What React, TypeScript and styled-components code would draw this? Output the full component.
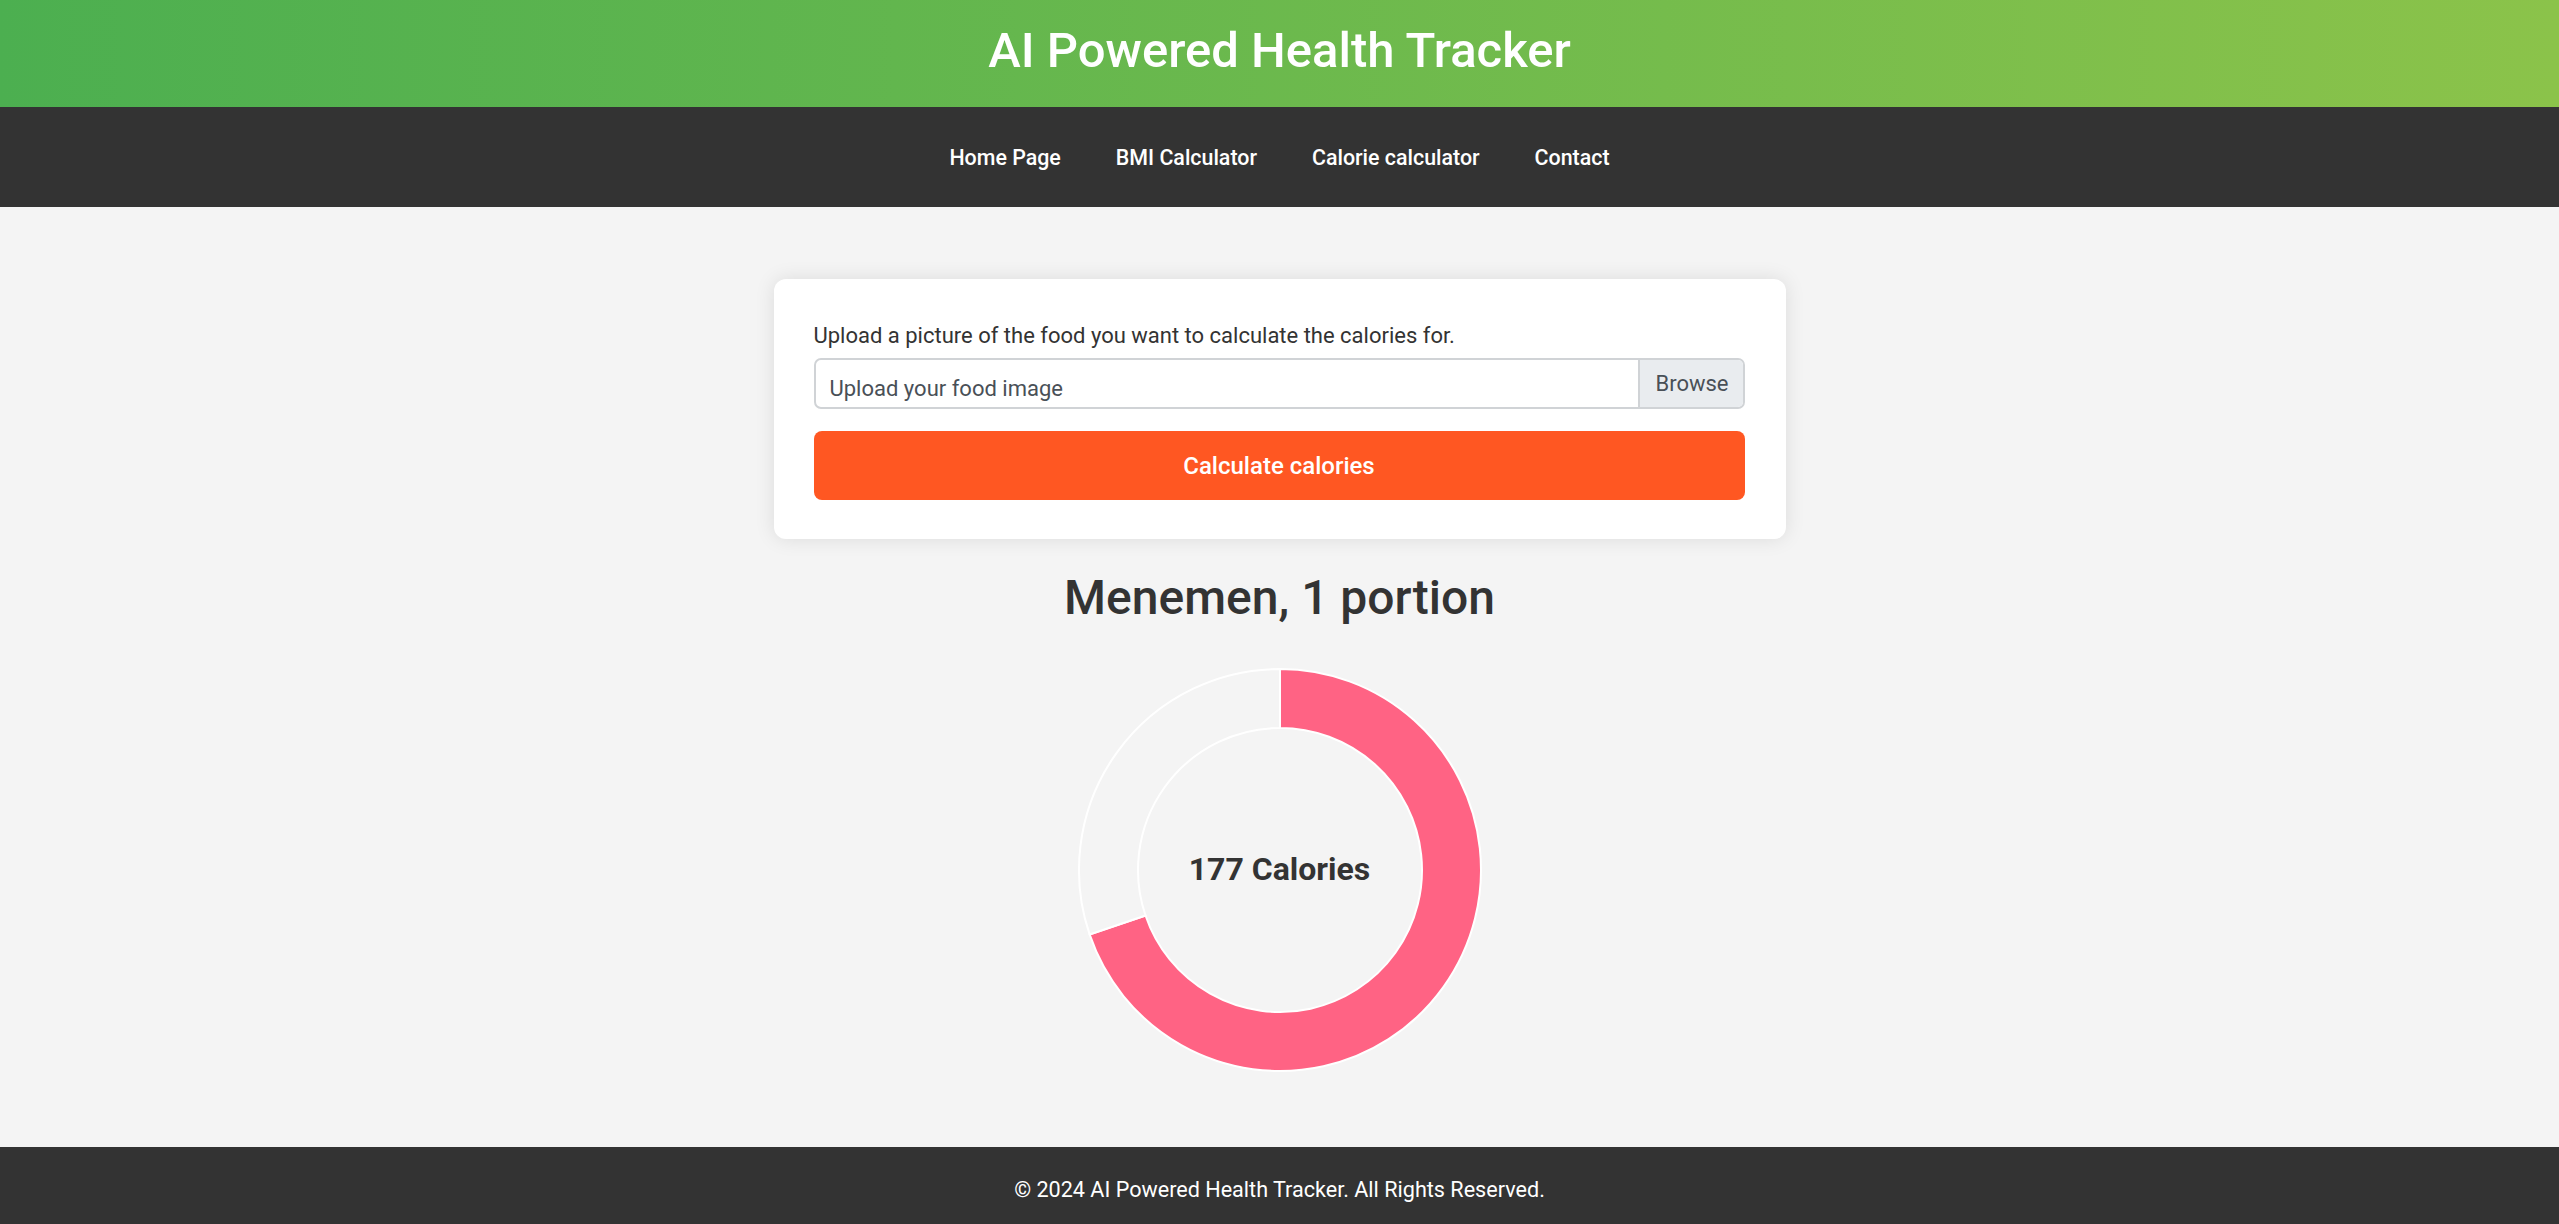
import styled, { createGlobalStyle } from "styled-components";

const GlobalStyle = createGlobalStyle`
    html, body {
        margin: 0;
        padding: 0;
        background-color: #f4f4f4;
        font-family: Roboto, "Liberation Sans", sans-serif;
    }
    * {
        box-sizing: border-box;
    }
`

const calories = 177
const share = 251.3 / 360

function polar(angle: number, radius: number) {
    const rad = (angle - 90) * Math.PI / 180
    return [radius * Math.cos(rad), radius * Math.sin(rad)]
}

function arcPath(start: number, end: number, outer: number, inner: number) {
    const large = end - start > 180 ? 1 : 0
    const [x1, y1] = polar(start, outer)
    const [x2, y2] = polar(end, outer)
    const [x3, y3] = polar(end, inner)
    const [x4, y4] = polar(start, inner)
    return `M ${x1} ${y1} A ${outer} ${outer} 0 ${large} 1 ${x2} ${y2} L ${x3} ${y3} A ${inner} ${inner} 0 ${large} 0 ${x4} ${y4} Z`
}

export default function App() {
    const split = share * 360

    return (
        <Page>
            <GlobalStyle />
            <Header>
                <h1>AI Powered Health Tracker</h1>
            </Header>
            <Nav>
                <NavLink href="#">Home Page</NavLink>
                <NavLink href="#">BMI Calculator</NavLink>
                <NavLink href="#">Calorie calculator</NavLink>
                <NavLink href="#">Contact</NavLink>
            </Nav>
            <Main>
                <Card>
                    <Label>Upload a picture of the food you want to calculate the calories for.</Label>
                    <FileInput>
                        <span className="placeholder">Upload your food image</span>
                        <span className="browse">Browse</span>
                    </FileInput>
                    <SubmitButton>Calculate calories</SubmitButton>
                </Card>
                <Result>Menemen, 1 portion</Result>
                <Donut>
                    <svg width="406" height="406" viewBox="-203 -203 406 406">
                        <path d={arcPath(0, split, 201, 142)} fill="#ff6384" stroke="#ffffff" strokeWidth="2" />
                        <path d={arcPath(split, 360, 201, 142)} fill="#f4f4f4" stroke="#ffffff" strokeWidth="2" />
                    </svg>
                    <DonutLabel>{calories} Calories</DonutLabel>
                </Donut>
            </Main>
            <Footer>© 2024 AI Powered Health Tracker. All Rights Reserved.</Footer>
        </Page>
    )
}

const Page = styled.div`
    display: flex;
    flex-direction: column;
    min-height: 100vh;
`

const Header = styled.header`
    height: 107px;
    display: flex;
    align-items: center;
    justify-content: center;
    background: linear-gradient(90deg, #4caf50, #8bc34a);

    h1 {
        margin: 0;
        color: white;
        font-size: 49px;
        font-weight: 500;
        padding-bottom: 6px;
    }
`

const Nav = styled.nav`
    height: 100px;
    display: flex;
    align-items: center;
    justify-content: center;
    gap: 55px;
    background-color: #333;
`

const NavLink = styled.a`
    color: white;
    text-decoration: none;
    font-size: 21.4px;
    font-weight: 500;
`

const Main = styled.main`
    flex: 1;
    display: flex;
    flex-direction: column;
    align-items: center;
    padding-top: 72px;
`

const Card = styled.div`
    width: 1012px;
    padding: 40px 41px 39px 40px;
    background-color: white;
    border-radius: 12px;
    box-shadow: 0 0 20px rgba(0, 0, 0, 0.1);
    display: flex;
    flex-direction: column;
`

const Label = styled.label`
    font-size: 22px;
    line-height: 33px;
    font-weight: 400;
    color: #333;
    margin-bottom: 6px;
`

const FileInput = styled.div`
    display: flex;
    height: 51px;
    border: 2px solid #d0d3d6;
    border-radius: 7px;
    overflow: hidden;
    font-size: 22px;
    color: #495057;

    .placeholder {
        flex: 1;
        display: flex;
        align-items: center;
        padding: 10px 14px 0;
    }

    .browse {
        display: flex;
        align-items: center;
        padding: 0 14px 0 15px;
        background-color: #e9ecef;
        border-left: 2px solid #d0d3d6;
    }
`

const SubmitButton = styled.button`
    margin-top: 22px;
    height: 69px;
    border: none;
    border-radius: 8px;
    background-color: #ff5722;
    color: white;
    font-family: Roboto, "Liberation Sans", sans-serif;
    font-size: 24px;
    font-weight: 500;
    cursor: pointer;
`

const Result = styled.h2`
    margin: 31px 0 0;
    font-size: 48px;
    line-height: 55px;
    font-weight: 500;
    color: #333;
`

const Donut = styled.div`
    position: relative;
    margin-top: 42px;
    width: 406px;
    height: 406px;

    svg {
        display: block;
    }
`

const DonutLabel = styled.div`
    position: absolute;
    inset: 0;
    display: flex;
    align-items: center;
    justify-content: center;
    padding-bottom: 2px;
    font-size: 32px;
    font-weight: 700;
    color: #333;
`

const Footer = styled.footer`
    height: 77px;
    display: flex;
    align-items: center;
    justify-content: center;
    padding-top: 8px;
    background-color: #333;
    color: white;
    font-size: 21.6px;
`
